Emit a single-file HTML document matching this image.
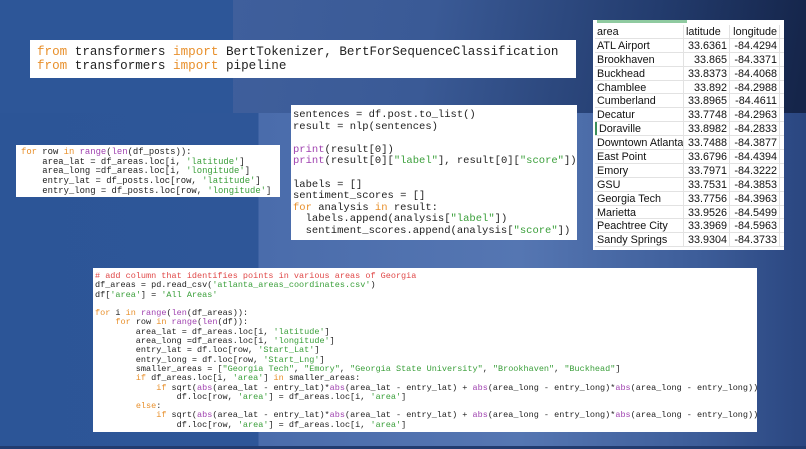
<!DOCTYPE html>
<html><head><meta charset="utf-8"><style>
*{margin:0;padding:0;box-sizing:border-box}
body{width:806px;height:449px;overflow:hidden;position:relative;font-family:"Liberation Mono",monospace;
background:linear-gradient(90deg,#2c5597 0,#2e5698 258px,#4a6cab 259px,#5576b2 520px,#3d5d99 700px,#2a4680 806px);}
.top{position:absolute;left:233px;top:0;width:573px;height:113px;background:linear-gradient(100deg,#3f5f9c 0,#3a5a96 200px,#233c6e 420px,#15254a 573px)}
.lt{position:absolute;left:0;top:0;width:233px;height:113px;background:#2d5698}
.bot{position:absolute;left:0;top:446px;width:806px;height:3px;background:#223c70}
.box{position:absolute;background:#fff;white-space:pre;color:#222}
.k{color:#e8902c}.b{color:#a043b0}.s{color:#3a9f3a}.c{color:#e04848}
.tb{position:absolute;background:#fff;left:593px;top:20px;width:191px;height:230px;padding:5px 0 0 2px;overflow:hidden;font-family:"Liberation Sans",sans-serif;font-size:10.8px;color:#111}
.r{display:flex;height:13.9px;max-height:13.9px;overflow:hidden;line-height:15px;border-bottom:1px solid #e2e2e2;white-space:nowrap}
.r span{display:block;padding:0 2px;border-right:1px solid #e2e2e2;overflow:hidden}
.r span:nth-child(1){width:89px}
.r span:nth-child(2){width:46px;text-align:right}
.r span:nth-child(3){width:50px;text-align:right}
</style></head><body>
<div class="lt"></div><div class="top"></div><div class="bot"></div>

<div class="box" style="left:30px;top:40px;width:546px;height:38px;font-size:12.6px;line-height:14px;padding:5px 0 0 7px"><span class="k">from</span> transformers <span class="k">import</span> BertTokenizer, BertForSequenceClassification
<span class="k">from</span> transformers <span class="k">import</span> pipeline</div>

<div class="box" style="left:16px;top:145px;width:264px;height:52px;font-size:8.9px;line-height:9.7px;padding:3px 0 0 5px"><span class="k">for</span> row <span class="k">in</span> <span class="b">range</span>(<span class="b">len</span>(df_posts)):
    area_lat = df_areas.loc[i, <span class="s">'latitude'</span>]
    area_long =df_areas.loc[i, <span class="s">'longitude'</span>]
    entry_lat = df_posts.loc[row, <span class="s">'latitude'</span>]
    entry_long = df_posts.loc[row, <span class="s">'longitude'</span>]</div>

<div class="box" style="left:291px;top:105px;width:286px;height:135px;font-size:10.5px;line-height:11.6px;padding:5px 0 0 2px;overflow:hidden">sentences = df.post.to_list()
result = nlp(sentences)

<span class="b">print</span>(result[0])
<span class="b">print</span>(result[0][<span class="s">"label"</span>], result[0][<span class="s">"score"</span>])

labels = []
sentiment_scores = []
<span class="k">for</span> analysis <span class="k">in</span> result:
  labels.append(analysis[<span class="s">"label"</span>])
  sentiment_scores.append(analysis[<span class="s">"score"</span>])</div>

<div class="tb">
<div style="position:absolute;left:4px;top:0;width:90px;height:3px;background:#8fcaa0"></div>
<div class="r"><span>area</span><span style="text-align:left">latitude</span><span>longitude</span></div>
<div class="r"><span>ATL Airport</span><span>33.6361</span><span>-84.4294</span></div>
<div class="r"><span>Brookhaven</span><span>33.865</span><span>-84.3371</span></div>
<div class="r"><span>Buckhead</span><span>33.8373</span><span>-84.4068</span></div>
<div class="r"><span>Chamblee</span><span>33.892</span><span>-84.2988</span></div>
<div class="r"><span>Cumberland</span><span>33.8965</span><span>-84.4611</span></div>
<div class="r"><span>Decatur</span><span>33.7748</span><span>-84.2963</span></div>
<div class="r"><span style="border-left:2px solid #3a8f5a">Doraville</span><span>33.8982</span><span>-84.2833</span></div>
<div class="r"><span>Downtown Atlanta</span><span>33.7488</span><span>-84.3877</span></div>
<div class="r"><span>East Point</span><span>33.6796</span><span>-84.4394</span></div>
<div class="r"><span>Emory</span><span>33.7971</span><span>-84.3222</span></div>
<div class="r"><span>GSU</span><span>33.7531</span><span>-84.3853</span></div>
<div class="r"><span>Georgia Tech</span><span>33.7756</span><span>-84.3963</span></div>
<div class="r"><span>Marietta</span><span>33.9526</span><span>-84.5499</span></div>
<div class="r"><span>Peachtree City</span><span>33.3969</span><span>-84.5963</span></div>
<div class="r"><span>Sandy Springs</span><span>33.9304</span><span>-84.3733</span></div>
</div>

<div class="box" style="left:93px;top:268px;width:664px;height:164px;font-size:8.5px;line-height:9.3px;padding:4px 0 0 2px;overflow:hidden"><span class="c"># add column that identifies points in various areas of Georgia</span>
df_areas = pd.read_csv(<span class="s">'atlanta_areas_coordinates.csv'</span>)
df[<span class="s">'area'</span>] = <span class="s">'All Areas'</span>

<span class="k">for</span> i <span class="k">in</span> <span class="b">range</span>(<span class="b">len</span>(df_areas)):
    <span class="k">for</span> row <span class="k">in</span> <span class="b">range</span>(<span class="b">len</span>(df)):
        area_lat = df_areas.loc[i, <span class="s">'latitude'</span>]
        area_long =df_areas.loc[i, <span class="s">'longitude'</span>]
        entry_lat = df.loc[row, <span class="s">'Start_Lat'</span>]
        entry_long = df.loc[row, <span class="s">'Start_Lng'</span>]
        smaller_areas = [<span class="s">"Georgia Tech"</span>, <span class="s">"Emory"</span>, <span class="s">"Georgia State University"</span>, <span class="s">"Brookhaven"</span>, <span class="s">"Buckhead"</span>]
        <span class="k">if</span> df_areas.loc[i, <span class="s">'area'</span>] <span class="k">in</span> smaller_areas:
            <span class="k">if</span> sqrt(<span class="b">abs</span>(area_lat - entry_lat)*<span class="b">abs</span>(area_lat - entry_lat) + <span class="b">abs</span>(area_long - entry_long)*<span class="b">abs</span>(area_long - entry_long))
                df.loc[row, <span class="s">'area'</span>] = df_areas.loc[i, <span class="s">'area'</span>]
        <span class="k">else</span>:
            <span class="k">if</span> sqrt(<span class="b">abs</span>(area_lat - entry_lat)*<span class="b">abs</span>(area_lat - entry_lat) + <span class="b">abs</span>(area_long - entry_long)*<span class="b">abs</span>(area_long - entry_long))
                df.loc[row, <span class="s">'area'</span>] = df_areas.loc[i, <span class="s">'area'</span>]</div>
</body></html>
